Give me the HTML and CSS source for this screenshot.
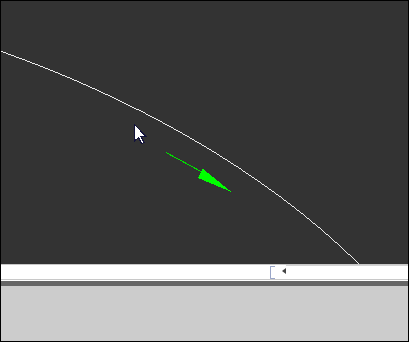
FILE: index.html
```html
<!DOCTYPE html>
<html>
<head>
<meta charset="utf-8">
<link rel="stylesheet" href="styles.css">
</head>
<body>
<div class="frame">
  <div class="canvas">
    <svg class="plot" width="407" height="263" viewBox="1 1 407 263">
      <path d="M0 51 C 128 96, 262 168, 359.5 264.5" fill="none" stroke="#ffffff" stroke-width="0.9"/>
      <line x1="166" y1="152.5" x2="202" y2="172" stroke="#00dd00" stroke-width="1"/>
      <polygon points="202.5,168.5 198,178 231.5,192" fill="#00ff00"/>
      <path d="M134.5 124.5 L134.5 141 L138.5 137.5 L141.5 143.5 L144 142.5 L141 136.5 L146 136.5 Z" fill="#ffffff" stroke="#14143c" stroke-width="1"/>
    </svg>
  </div>
  <div class="hscroll">
    <div class="track-left"></div>
    <div class="thumb"></div>
    <div class="arrow"></div>
    <div class="track-right"></div>
  </div>
  <div class="band"></div>
  <div class="bottom"></div>
</div>
</body>
</html>
```
FILE: styles.css
```css
html, body {
  margin: 0;
  padding: 0;
  background: #ffffff;
}
.frame {
  width: 409px;
  height: 342px;
  box-sizing: border-box;
  border: 1px solid #000000;
  display: flex;
  flex-direction: column;
  overflow: hidden;
}
.canvas {
  height: 263px;
  background: #333333;
  flex: none;
  overflow: hidden;
}
.plot {
  display: block;
  shape-rendering: crispEdges;
}
.hscroll {
  height: 17px;
  flex: none;
  display: flex;
  align-items: flex-start;
  background: #ffffff;
  border-top: 1px solid #c8c8c8;
  box-sizing: border-box;
  position: relative;
}
.hscroll::after {
  content: "";
  position: absolute;
  left: 0;
  right: 0;
  top: 14px;
  height: 1px;
  background: #c8c8c8;
}
.track-left {
  width: 269px;
  height: 14px;
}
.thumb {
  width: 4px;
  height: 11px;
  margin-top: 1px;
  border: 1px solid #9aa6c8;
  border-right: none;
  border-radius: 1px 0 0 1px;
}
.arrow {
  width: 0;
  height: 0;
  margin-left: 7px;
  margin-top: 3px;
  border-top: 3px solid transparent;
  border-bottom: 3px solid transparent;
  border-right: 4px solid #444444;
}
.track-right {
  flex: 1;
  height: 14px;
  border-top: 1px solid #d4d4d4;
  margin-top: 0;
}
.band {
  height: 5px;
  flex: none;
  background: #666666;
}
.bottom {
  flex: 1;
  background: #cccccc;
}
```
